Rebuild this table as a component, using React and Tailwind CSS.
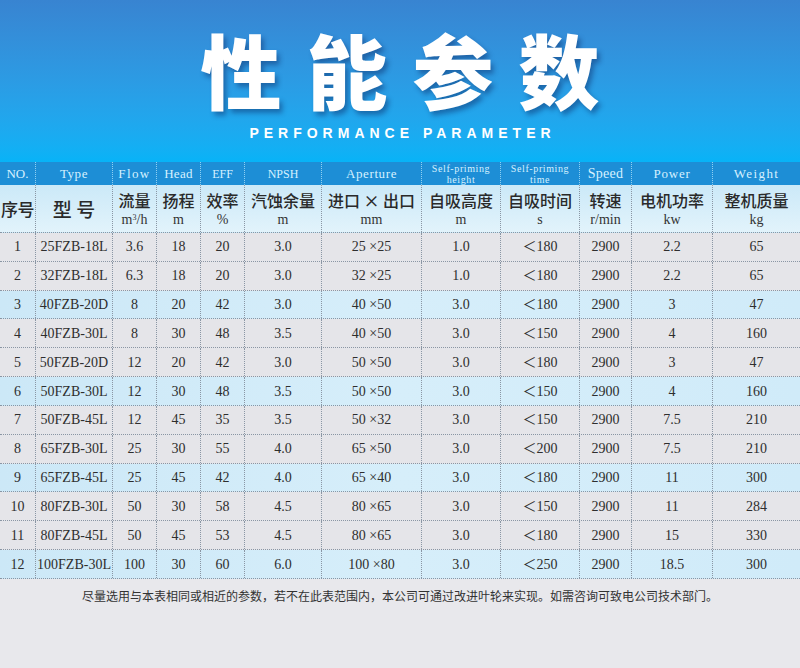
import React from "react";

const cols = "grid grid-cols-[36px_77px_44px_44px_44px_77px_100px_79px_79px_52px_81px_87px]";

const rows = [
  ["1", "25FZB-18L", "3.6", "18", "20", "3.0", "25 ×25", "1.0", "＜180", "2900", "2.2", "65"],
  ["2", "32FZB-18L", "6.3", "18", "20", "3.0", "32 ×25", "1.0", "＜180", "2900", "2.2", "65"],
  ["3", "40FZB-20D", "8", "20", "42", "3.0", "40 ×50", "3.0", "＜180", "2900", "3", "47"],
  ["4", "40FZB-30L", "8", "30", "48", "3.5", "40 ×50", "3.0", "＜150", "2900", "4", "160"],
  ["5", "50FZB-20D", "12", "20", "42", "3.0", "50 ×50", "3.0", "＜180", "2900", "3", "47"],
  ["6", "50FZB-30L", "12", "30", "48", "3.5", "50 ×50", "3.0", "＜150", "2900", "4", "160"],
  ["7", "50FZB-45L", "12", "45", "35", "3.5", "50 ×32", "3.0", "＜150", "2900", "7.5", "210"],
  ["8", "65FZB-30L", "25", "30", "55", "4.0", "65 ×50", "3.0", "＜200", "2900", "7.5", "210"],
  ["9", "65FZB-45L", "25", "45", "42", "4.0", "65 ×40", "3.0", "＜180", "2900", "11", "300"],
  ["10", "80FZB-30L", "50", "30", "58", "4.5", "80 ×65", "3.0", "＜150", "2900", "11", "284"],
  ["11", "80FZB-45L", "50", "45", "53", "4.5", "80 ×65", "3.0", "＜180", "2900", "15", "330"],
  ["12", "100FZB-30L", "100", "30", "60", "6.0", "100 ×80", "3.0", "＜250", "2900", "18.5", "300"],
];

const serif = "font-['Liberation_Serif','Noto_Sans_CJK_SC',serif]";
const cjk = "font-['Noto_Sans_CJK_SC','Noto_Sans',sans-serif]";

const enHead = [
  { t: "NO.", c: "text-[13px]" },
  { t: "Type", c: "text-[13px] tracking-[0.6px]" },
  { t: "Flow", c: "text-[13px] tracking-[1.4px]" },
  { t: "Head", c: "text-[13px] tracking-[0.3px]" },
  { t: "EFF", c: "text-[12px]" },
  { t: "NPSH", c: "text-[12px]" },
  { t: "Aperture", c: "text-[13px] tracking-[0.6px]" },
  { t: "Self-priming\nheight", c: "text-[10px] leading-[11px] tracking-[0.6px] whitespace-pre" },
  { t: "Self-priming\ntime", c: "text-[10px] leading-[11px] tracking-[0.6px] whitespace-pre" },
  { t: "Speed", c: "text-[14px] tracking-[0.3px]" },
  { t: "Power", c: "text-[13px] tracking-[0.8px]" },
  { t: "Weight", c: "text-[13px] tracking-[1.4px]" },
];

const zhHead = [
  ["序号", null],
  ["型 号", null],
  ["流量", "m3/h"],
  ["扬程", "m"],
  ["效率", "%"],
  ["汽蚀余量", "m"],
  ["进口 × 出口", "mm"],
  ["自吸高度", "m"],
  ["自吸时间", "s"],
  ["转速", "r/min"],
  ["电机功率", "kw"],
  ["整机质量", "kg"],
];

export default function App() {
  return (
    <div className="w-[800px] h-[668px] bg-[#e8e8ec] flex flex-col overflow-hidden">
      <div className="h-[162px] bg-gradient-to-b from-[#3884d1] to-[#07b3f7] flex flex-col items-center">
        <div
          className={`${cjk} font-black text-white text-[81px] leading-[81px] tracking-[25px] pl-[25px] mt-[27px] [text-shadow:3px_4px_5px_rgba(10,40,100,0.45)]`}
        >
          性能参数
        </div>
        <div className="font-['Liberation_Sans',Arial,sans-serif] font-bold text-white text-[14px] leading-[16px] tracking-[5px] pl-[5px] mt-[17px]">
          PERFORMANCE PARAMETER
        </div>
      </div>

      <div className={`${cols} h-[23px] bg-[#1d8ed6]`}>
        {enHead.map((h, i) => (
          <div
            key={i}
            className={`flex items-center justify-center text-center text-[#d6f1ff] ${serif} ${i < 11 ? "border-r border-dotted border-[#8fd0f2]" : ""} ${h.c}`}
          >
            {h.t}
          </div>
        ))}
      </div>

      <div className={`${cols} h-[48px] bg-gradient-to-b from-[#cbe9f8] to-[#e2f3fb] border-b border-dotted border-[#8a96a4]`}>
        {zhHead.map(([zh, unit], i) => (
          <div
            key={i}
            className={`flex flex-col items-center justify-center text-[#2a2a2a] ${i < 11 ? "border-r border-dotted border-[#8a96a4]" : ""}`}
          >
            <div
              className={`${cjk} font-medium whitespace-pre leading-[22px] ${i === 0 ? "text-[17px] tracking-[-0.5px]" : i === 1 ? "text-[19px]" : "text-[16px]"}`}
            >
              {zh}
            </div>
            {unit && (
              <div className={`${serif} text-[14px] leading-[17px] text-[#333]`}>
                {unit === "m3/h" ? (
                  <span>
                    m<sup className="text-[8px]">3</sup>/h
                  </span>
                ) : (
                  unit
                )}
              </div>
            )}
          </div>
        ))}
      </div>

      <div className="h-[346px] flex flex-col">
        {rows.map((r, ri) => (
          <div
            key={ri}
            className={`${cols} flex-1 border-b border-dotted border-[#8a96a4] ${ri % 3 === 2 ? "bg-gradient-to-r from-[#cce8f7] via-[#d6eefa] to-[#d0ebf9]" : "bg-[#e5e5e9]"}`}
          >
            {r.map((c, ci) => (
              <div
                key={ci}
                className={`flex items-center justify-center ${serif} text-[14px] text-[#2e2e2e] whitespace-nowrap ${ci < 11 ? "border-r border-dotted border-[#8a96a4]" : ""}`}
              >
                {c}
              </div>
            ))}
          </div>
        ))}
      </div>

      <div className={`${cjk} text-[12px] leading-[16px] text-[#333] text-center mt-[9px]`}>
        尽量选用与本表相同或相近的参数，若不在此表范围内，本公司可通过改进叶轮来实现。如需咨询可致电公司技术部门。
      </div>
    </div>
  );
}
